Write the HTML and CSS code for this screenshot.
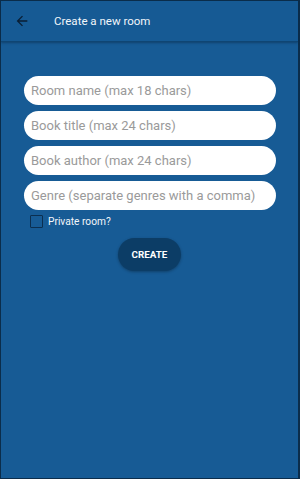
FILE: index.html
```html
<!DOCTYPE html>
<html lang="en">
<head>
  <meta charset="UTF-8" />
  <meta name="viewport" content="width=device-width, initial-scale=1.0"/>
  <title>Create a new room</title>
  <link rel="stylesheet" href="styles.css">
</head>
<body>
  <div class="frame">
    <div class="header">
      <button class="back-button" aria-label="Back">
        <svg viewBox="0 0 24 24" width="16" height="16">
          <path d="M20 11H7.83l5.59-5.59L12 4l-8 8 8 8 1.41-1.41L7.83 13H20v-2z"/>
        </svg>
      </button>
      <div class="header-title">Create a new room</div>
    </div>

    <form class="room-form">
      <input class="field" type="text" placeholder="Room name (max 18 chars)">
      <input class="field" type="text" placeholder="Book title (max 24 chars)">
      <input class="field" type="text" placeholder="Book author (max 24 chars)">
      <input class="field" type="text" placeholder="Genre (separate genres with a comma)">
      <label class="private-row">
        <span class="checkbox"></span>
        <span>Private room?</span>
      </label>
      <button type="button" class="create-button">CREATE</button>
    </form>
  </div>
</body>
</html>
```

FILE: styles.css
```css
  html, body {
    margin: 0;
    padding: 0;
    height: 100%;
  }

  body {
    background: #0a2a45;
    font-family: Roboto, "Noto Sans", Arial, sans-serif;
    color: white;
  }

  .frame {
    box-sizing: border-box;
    height: 479px;
    width: 300px;
    background: #175b95;
    border: 1px solid #0b2d4b;
    border-right-width: 2px;
    display: flex;
    flex-direction: column;
  }

  /* HEADER */
  .header {
    height: 40px;
    display: flex;
    align-items: center;
    background: #165a94;
    border-bottom: 1px solid #0f4573;
    box-shadow: 0 1px 2px rgba(10, 40, 70, 0.5);
  }

  .back-button {
    background: none;
    border: none;
    padding: 0;
    margin-left: 13px;
    width: 16px;
    height: 16px;
    display: flex;
  }

  .back-button svg {
    fill: #0a1e33;
  }

  .header-title {
    margin-left: 24px;
    font-size: 11.5px;
    color: #f2f6fa;
  }

  /* FORM */
  .room-form {
    display: flex;
    flex-direction: column;
    align-items: center;
    padding-top: 34px;
    gap: 6px;
  }

  .field {
    box-sizing: border-box;
    width: 252px;
    height: 29px;
    margin-left: 1px;
    border: none;
    border-radius: 15px;
    background: white;
    padding: 0 7px;
    font-family: Roboto, "Noto Sans", Arial, sans-serif;
    font-size: 13px;
    color: #333;
    outline: none;
  }

  .field::placeholder {
    color: #9a9a9a;
  }

  .private-row {
    align-self: flex-start;
    margin-left: 29px;
    margin-top: -1px;
    display: flex;
    align-items: center;
    gap: 5px;
    font-size: 10.2px;
    color: #f2f6fa;
  }

  .checkbox {
    box-sizing: border-box;
    width: 13px;
    height: 13px;
    border: 1.5px solid #0b2f50;
    border-radius: 1px;
  }

  .create-button {
    margin-top: 4px;
    width: 63px;
    height: 33px;
    border: none;
    border-radius: 17px;
    background: #0c3d66;
    color: white;
    font-family: Roboto, "Noto Sans", Arial, sans-serif;
    font-size: 9.8px;
    font-weight: bold;
    box-shadow: 0 1px 3px rgba(0, 0, 0, 0.3);
  }
```
